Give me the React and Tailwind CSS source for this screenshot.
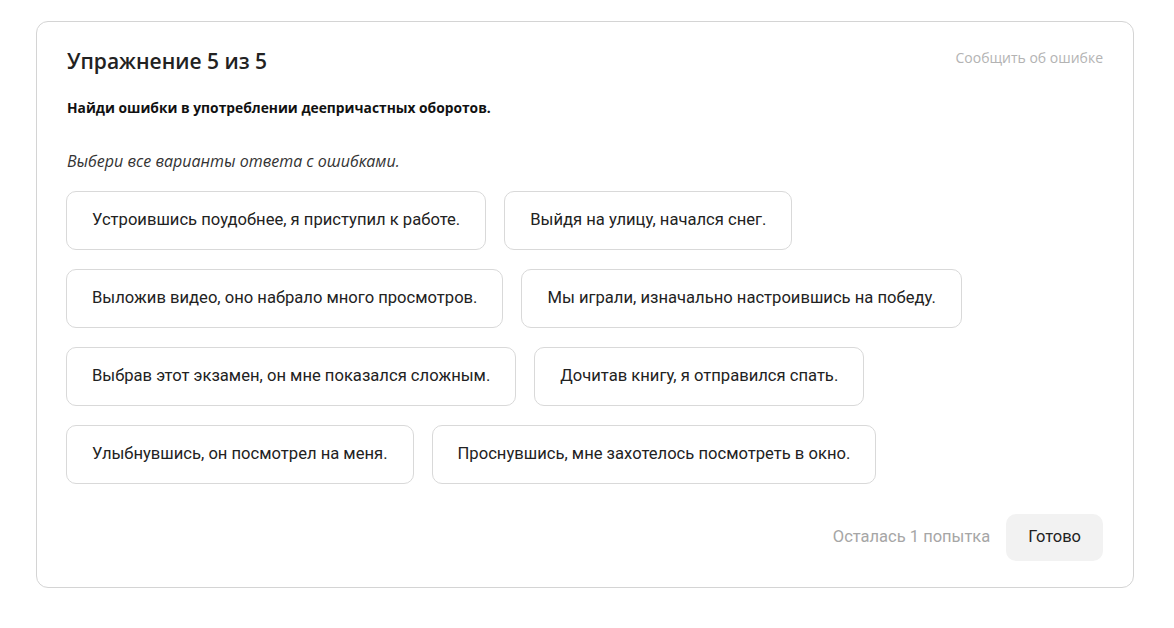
import React from 'react';

const rows = [
  ['Устроившись поудобнее, я приступил к работе.', 'Выйдя на улицу, начался снег.'],
  ['Выложив видео, оно набрало много просмотров.', 'Мы играли, изначально настроившись на победу.'],
  ['Выбрав этот экзамен, он мне показался сложным.', 'Дочитав книгу, я отправился спать.'],
  ['Улыбнувшись, он посмотрел на меня.', 'Проснувшись, мне захотелось посмотреть в окно.'],
];

const Option = ({ text }) => (
  <button className="h-[59px] px-[25px] flex items-center rounded-[10px] border border-[#d9d9d9] bg-white text-[16.6px] text-[#222] font-['Roboto',sans-serif] whitespace-nowrap">
    {text}
  </button>
);

export default function App() {
  return (
    <div className="min-h-screen bg-white pt-[21px] pl-[36px] pr-[40px] font-['Open_Sans',sans-serif]">
      <div className="w-[1098px] h-[567px] rounded-[12px] border border-[#d4d4d4] pl-[29px] pr-[30px] pt-[24px]">
        <div className="flex justify-between items-start">
          <h1 className="pl-[1px] text-[21px] leading-[30px] font-semibold text-[#222]">Упражнение 5 из 5</h1>
          <a className="text-[14px] leading-[20px] mt-[2px] text-[#b3b3b3]">Сообщить об ошибке</a>
        </div>
        <p className="mt-[22px] pl-[1px] text-[13.8px] leading-[20px] font-bold text-[#111]">
          Найди ошибки в употреблении деепричастных оборотов.
        </p>
        <p className="mt-[31px] pl-[1px] text-[16px] leading-[24px] italic text-[#333]">
          Выбери все варианты ответа с ошибками.
        </p>
        <div className="mt-[18px] flex flex-col gap-[19px]">
          {rows.map((r, i) => (
            <div key={i} className="flex gap-[18px]">
              {r.map((t) => (
                <Option key={t} text={t} />
              ))}
            </div>
          ))}
        </div>
        <div className="mt-[30px] flex justify-end items-center gap-[16px] font-['Roboto',sans-serif]">
          <span className="text-[16.5px] text-[#a6a6a6]">Осталась 1 попытка</span>
          <button className="h-[47px] px-[22px] rounded-[10px] bg-[#f2f2f2] text-[16.5px] text-[#222]">Готово</button>
        </div>
      </div>
    </div>
  );
}
